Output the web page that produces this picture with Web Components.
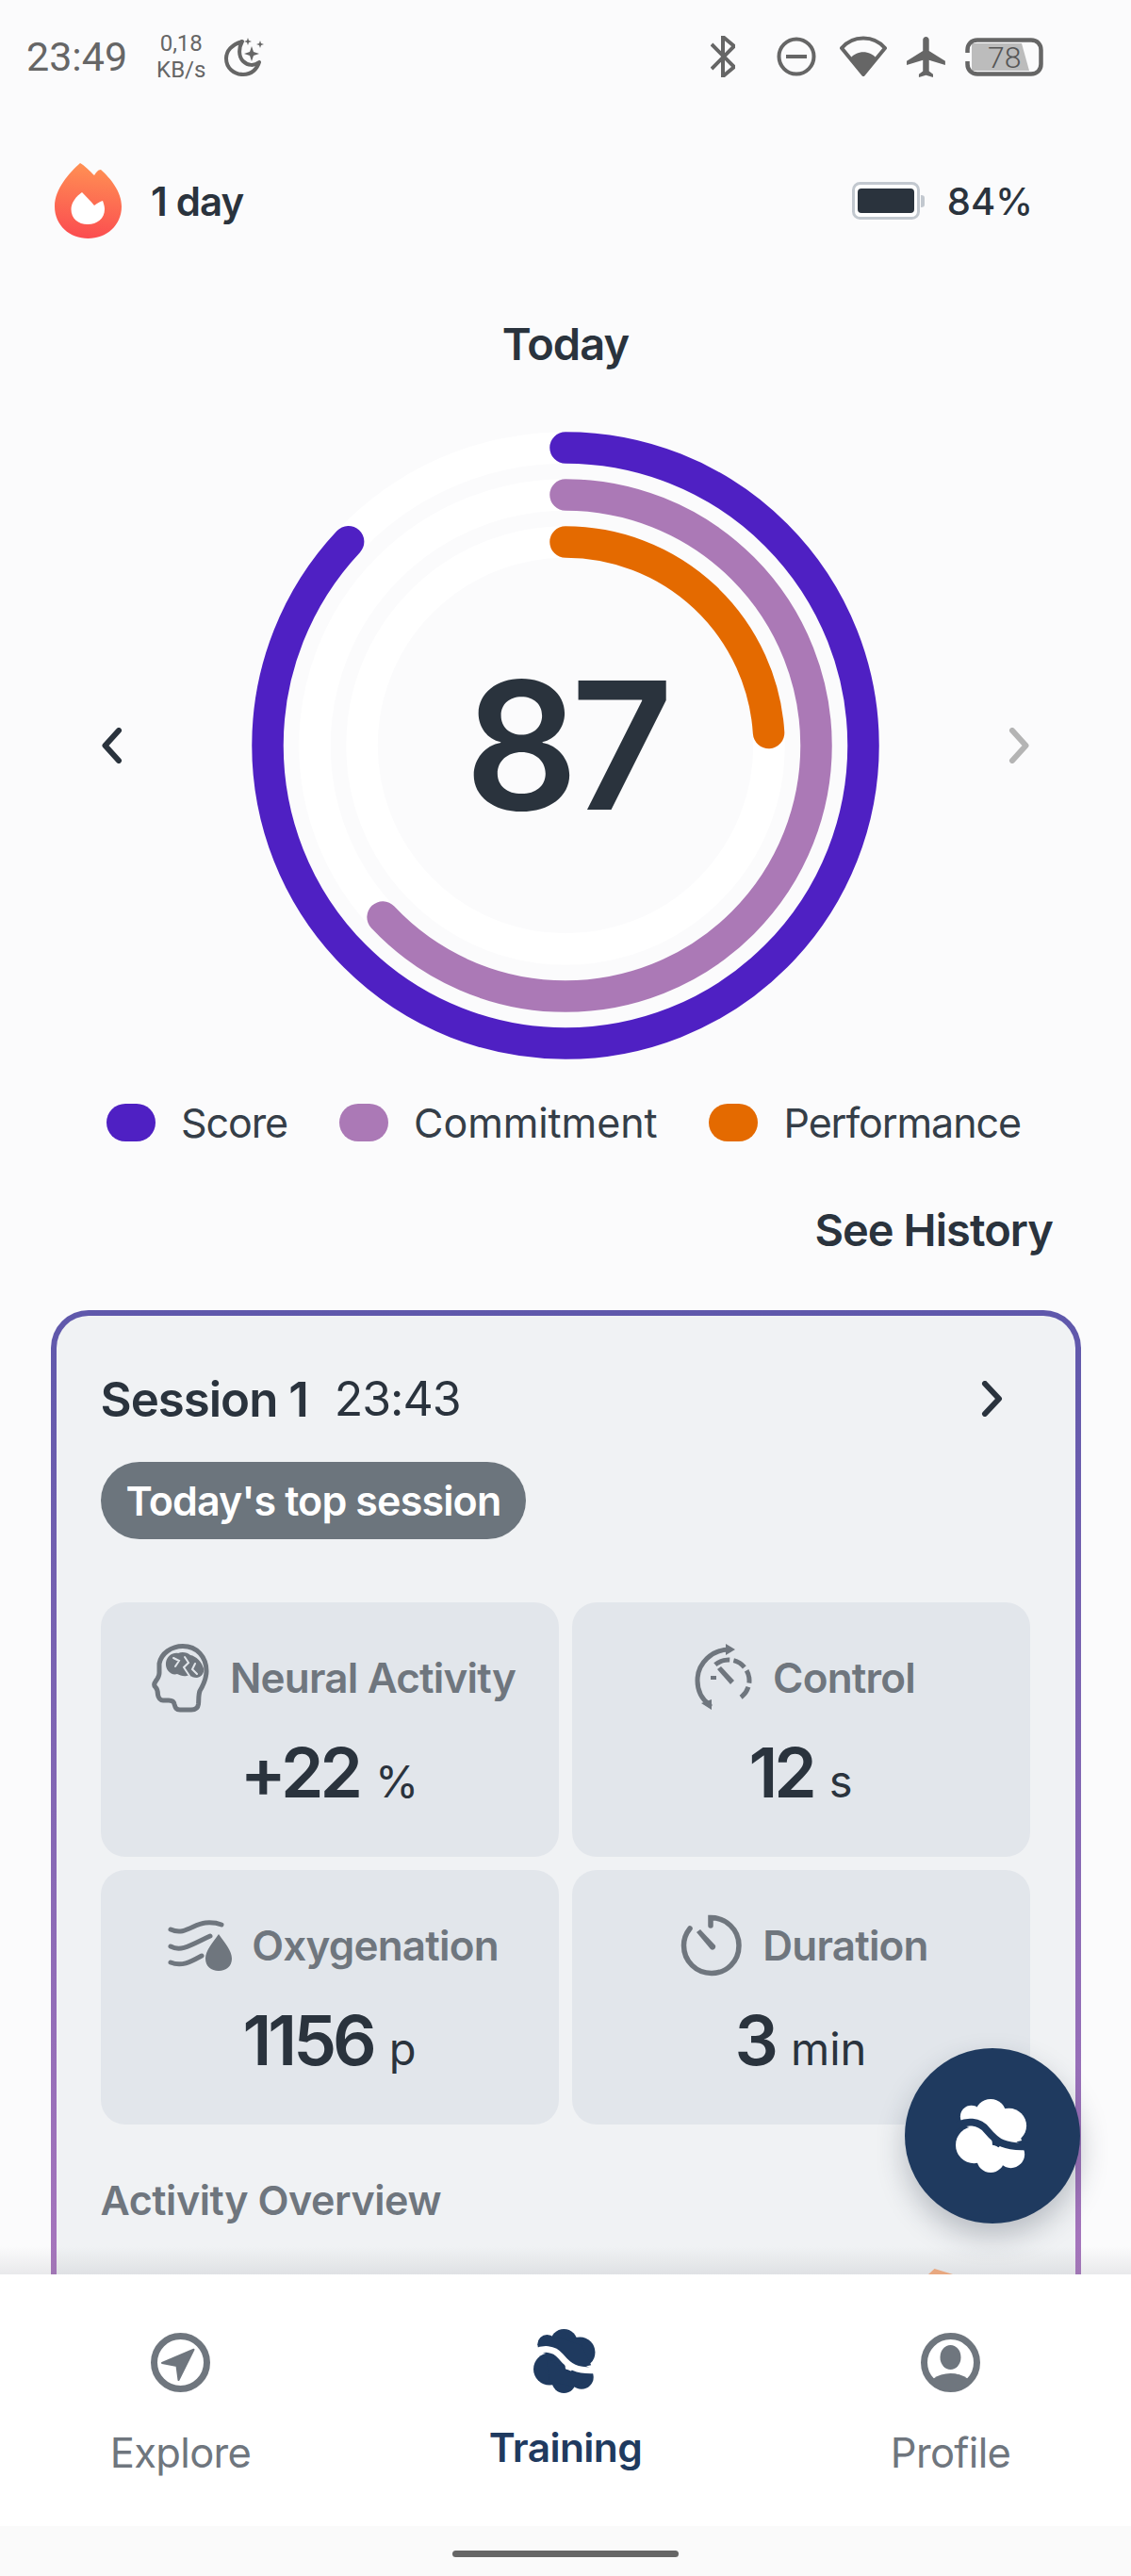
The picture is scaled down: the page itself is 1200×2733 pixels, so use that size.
<!DOCTYPE html>
<html lang="en">
<head>
<meta charset="utf-8">
<title>Training</title>
<style>
  html, body { margin: 0; padding: 0; background: #fbfbfc; }
  body { font-family: "Inter", "Liberation Sans", sans-serif; color: #2a333d; }
</style>
</head>
<body>
<app-screen>
  <status-bar></status-bar>
  <streak-row></streak-row>
  <day-title>Today</day-title>
  <score-ring score="87" commitment="63" performance="24"></score-ring>
  <ring-legend></ring-legend>
  <see-history>See History</see-history>
  <session-card name="Session 1" time="23:43" badge="Today's top session">
    <stat-tile label="Neural Activity" value="+22" unit="%">
      <svg slot="icon" width="63" height="75" viewBox="0 0 63 75">
        <path d="M34 3.500C49 3.500 59 15 59 30C59 39 55 46 52 51C50.500 55 51 60 50.500 65C50 69 47 71 43 71H31C27 71 26 69 25 65C24.500 62 22 61 19 61H13C10 61 8 58 7.500 55C7.500 52 7 49 5 47C3 45 3.500 43 5 41C7 38 9 36 9 32V22C11 11 22 3.500 34 3.500Z" fill="none" stroke="#6f767e" stroke-width="5"/>
        <path d="M16 21C17 14 23 10 29 11C33 9 39 10 42 13C48 14 54 20 56 27C57 32 54 36 49 37C44 37 41 34 38 35C34 36 31 34 28 33C22 35 15 29 16 21Z" fill="#6f767e"/>
        <path d="M24 16L30 19L26 25M36 15L40 21L35 26L41 35M47 22L44 28L49 33" fill="none" stroke="#e2e6eb" stroke-width="2" stroke-linecap="round"/>
      </svg>
    </stat-tile>
    <stat-tile label="Control" value="12" unit="s">
      <svg slot="icon" width="63" height="72" viewBox="0 0 63 72">
        <path d="M38 6C20 6 4 20 4 39C4 50 9 59 17 65" fill="none" stroke="#6f767e" stroke-width="5" stroke-linecap="round"/>
        <path d="M34 0L44 6L34 12Z M8 63L19 59L19 70Z" fill="#6f767e"/>
        <circle cx="37" cy="39" r="22" fill="none" stroke="#6f767e" stroke-width="5" transform="rotate(-130 37 39)" pathLength="100" style="stroke-dasharray:12 3 10 3 10 3 10 49"/>
        <path d="M25 27L29 24L43 39L39 43Z" fill="#6f767e"/>
        <path d="M18 36H24" stroke="#6f767e" stroke-width="4"/>
      </svg>
    </stat-tile>
    <stat-tile label="Oxygenation" value="1156" unit="p">
      <svg slot="icon" width="68" height="55" viewBox="0 0 68 55">
        <path d="M3 10C18 17 27 4 40 3C47 2.500 52 3 57 5M3 28C14 34 24 27 45 17M3 45C15 50 25 44 36 38" fill="none" stroke="#6f767e" stroke-width="5" stroke-linecap="round"/>
        <path d="M54 15C60 24 68 32 68 41C68 49 62 54 54 54C46 54 40 49 40 41C40 32 48 24 54 15Z" fill="#6f767e"/>
      </svg>
    </stat-tile>
    <stat-tile label="Duration" value="3" unit="min">
      <svg slot="icon" width="66" height="66" viewBox="0 0 66 66">
        <path d="M32 12V3.500C48 3.500 62 16 62 33C62 50 49 62.500 33 62.500C17 62.500 3.500 50 3.500 33C3.500 26 6 20 10 15" fill="none" stroke="#6f767e" stroke-width="5.500" stroke-linecap="round"/>
        <path d="M17 19L21 16L37 33C38 36 35 39 32 37Z" fill="#6f767e"/>
      </svg>
    </stat-tile>
  </session-card>
  <app-fab slot="fab"></app-fab>
  <bottom-nav slot="nav"></bottom-nav>
</app-screen>

<script>
// helper: every element gets an open shadow root from a template string
function define(name, html, setup) {
  const template = document.createElement('template');
  template.innerHTML = html;
  customElements.define(name, class extends HTMLElement {
    constructor() {
      super();
      this.attachShadow({ mode: 'open' }).appendChild(template.content.cloneNode(true));
    }
    connectedCallback() {
      if (setup) setup(this, this.shadowRoot);
    }
  });
}

// ---- page frame ----
define('app-screen', `
  <style>
    :host { display: flex; flex-direction: column; position: relative; width: 1200px; height: 2733px; overflow: hidden; background: #fbfbfc; }
    #scroll { position: relative; height: 2413px; overflow: hidden; flex: none; }
    #scroll::after { content: ""; position: absolute; left: 0; right: 0; bottom: 0; height: 30px; background: linear-gradient(rgba(120,124,130,0), rgba(120,124,130,.14)); }
    #peek { position: absolute; left: 985px; top: 2407px; width: 26px; height: 6px; background: #e8a880; clip-path: polygon(0 100%, 25% 0, 100% 100%); z-index: 1; }
  </style>
  <div id="scroll"><slot></slot><div id="peek"></div></div>
  <slot name="fab"></slot>
  <slot name="nav"></slot>
`);

// ---- android status bar ----
define('status-bar', `
  <style>
    :host { display: flex; align-items: center; justify-content: space-between; height: 120px; padding: 0 93px 0 28px; font-family: Roboto, "Liberation Sans", sans-serif; color: #666; }
    .side { display: flex; align-items: center; }
    #time { font-size: 43px; }
    #speed { font-size: 24px; line-height: 28px; text-align: center; margin: 0 20px 0 31px; }
    svg { display: block; }
    #batt { position: relative; width: 83px; height: 41px; }
    #batt span { position: absolute; left: 24px; top: 2px; font-size: 32px; line-height: 38px; color: #555; font-weight: 300; }
  </style>
  <div class="side">
    <span id="time">23:49</span>
    <span id="speed">0,18<br>KB/s</span>
    <svg width="42" height="42" viewBox="0 0 42 42" fill="none" stroke="#666">
      <path d="M19 5C8 8 2 15 2 23C2 33 10 40 20 40C29 40 35 34 37 27C32 31 25 31 20 26C15 21 15 12 19 5Z" stroke-width="4" stroke-linejoin="round"/>
      <path d="M29 10L31 16L37 18L31 20L29 26L27 20L21 18L27 16Z M25 1L26 4L29 5L26 6L25 9L24 6L21 5L24 4Z M38 4L39 7L42 8L39 9L38 12L37 9L34 8L37 7Z" fill="#666" stroke="none"/>
    </svg>
  </div>
  <div class="side">
    <svg width="26" height="44" viewBox="0 0 26 44" fill="none" stroke="#666" stroke-width="4" style="margin-right:44px">
      <path d="M1 9L25 33L13 43V1L25 11L1 35"/>
    </svg>
    <svg width="42" height="42" viewBox="0 0 42 42" fill="none" stroke="#666" stroke-width="4" style="margin-right:25px">
      <circle cx="21" cy="21" r="18.500"/><path d="M10 21H32" stroke-width="4"/>
    </svg>
    <svg width="50" height="44" viewBox="0 0 50 44" style="margin-right:21px">
      <path d="M2 13C14 -1 36 -1 48 13L25 41Z" fill="none" stroke="#666" stroke-width="4" stroke-linejoin="round"/>
      <path d="M11 24C18 15 32 15 39 24L25 41Z" fill="#666"/>
    </svg>
    <svg width="42" height="43" viewBox="2 2 19.500 20" style="margin-right:20px">
      <path d="M21 16v-2l-8-5V3.500c0-.83-.67-1.500-1.500-1.500S10 2.670 10 3.500V9l-8 5v2l8-2.500V19l-2 1.500V22l3.500-1 3.500 1v-1.500L13 19v-5.500l8 2.500z" fill="#666"/>
    </svg>
    <div id="batt">
      <svg width="83" height="41" viewBox="0 0 83 41">
        <path d="M7 6H60L68 35H7Z" fill="#bcbcbc"/>
        <path d="M2.500 16V13C2.500 7 6.500 2.500 13 2.500H70C76.500 2.500 80.500 7 80.500 13V28C80.500 34 76.500 38.500 70 38.500H13C6.500 38.500 2.500 34 2.500 28V25" fill="none" stroke="#666" stroke-width="4.500"/>
      </svg>
      <span>78</span>
    </div>
  </div>
`);

// ---- streak + device battery ----
define('streak-row', `
  <style>
    :host { display: flex; align-items: center; justify-content: space-between; padding: 53px 104px 0 58px; height: 80px; font-size: 42px; letter-spacing: -0.02em; }
    .side { display: flex; align-items: center; }
    #day { font-weight: 600; margin-left: 31px; }
    #pct { font-weight: 500; font-size: 40px; margin-left: 23px; letter-spacing: 0; }
    svg { display: block; }
  </style>
  <div class="side">
    <svg width="71" height="80" viewBox="0 0 71 80">
      <defs><linearGradient id="fl" x1="0.5" y1="0" x2="0.4" y2="1"><stop offset="0" stop-color="#ff9154"/><stop offset="1" stop-color="#fb4c50"/></linearGradient></defs>
      <path d="M27 0C31 2 38 9 42 13C44 10 46 7 49 7C59 16 71 30 71 46C71 66 55 80 35.500 80C16 80 0 66 0 46C0 27 16 10 27 0Z" fill="url(#fl)"/>
      <path d="M29 31C33 35 38 40 42 45C45 43 47 41 51 40C52 43 53 46 53 49C53 59 45 65 35 65C25 65 17.500 59 17.500 49C17.500 42 23 35 29 31Z" fill="#fff"/>
    </svg>
    <span id="day">1 day</span>
  </div>
  <div class="side">
    <svg width="78" height="40" viewBox="0 0 78 40">
      <rect x="1.500" y="1.500" width="69" height="37" rx="7" fill="#fff" stroke="#c2c8cf" stroke-width="3"/>
      <rect x="6" y="7" width="60" height="26" rx="4" fill="#2a333d"/>
      <path d="M73 14C76 14 77 15 77 17V24C77 26 76 27 73 27Z" fill="#c2c8cf"/>
    </svg>
    <span id="pct">84%</span>
  </div>
`);

define('day-title', `
  <style>
    :host { display: block; text-align: center; margin-top: 87px; font-size: 47px; line-height: 50px; font-weight: 600; letter-spacing: -0.02em; }
  </style>
  <slot></slot>
`);

// ---- the three concentric progress rings ----
define('score-ring', `
  <style>
    :host { display: flex; align-items: center; justify-content: space-between; padding: 0 108px; margin-top: 68px; }
    #dial { display: grid; place-items: center; width: 666px; height: 666px; }
    #dial > * { grid-area: 1 / 1; }
    #num { font-size: 188px; font-weight: 600; letter-spacing: -0.04em; line-height: 1; color: #2a333d; }
    svg { display: block; }
  </style>
  <svg width="22" height="38" viewBox="0 0 22 38" fill="none" stroke="#2a333d" stroke-width="6" stroke-linecap="round" stroke-linejoin="round"><path d="M18 3L3.500 19L18 35"/></svg>
  <div id="dial">
    <svg width="666" height="666" viewBox="0 0 666 666">
      <g fill="none" stroke-width="33.500" transform="rotate(-90 333 333)">
        <circle cx="333" cy="333" r="316" stroke="#fff"/>
        <circle cx="333" cy="333" r="266" stroke="#fff"/>
        <circle cx="333" cy="333" r="216" stroke="#fff"/>
        <circle id="a" cx="333" cy="333" r="316" stroke="#4f20c3" stroke-linecap="round" pathLength="100"/>
        <circle id="b" cx="333" cy="333" r="266" stroke="#ab79b6" stroke-linecap="round" pathLength="100"/>
        <circle id="c" cx="333" cy="333" r="216" stroke="#e46a00" stroke-linecap="round" pathLength="100"/>
      </g>
    </svg>
    <span id="num"></span>
  </div>
  <svg width="22" height="38" viewBox="0 0 22 38" fill="none" stroke="#b4b4b4" stroke-width="6" stroke-linecap="round" stroke-linejoin="round"><path d="M4 3L18.500 19L4 35"/></svg>
`, (el, root) => {
  root.querySelector('#num').textContent = el.getAttribute('score');
  root.querySelector('#a').setAttribute('stroke-dasharray', el.getAttribute('score') + ' 100');
  root.querySelector('#b').setAttribute('stroke-dasharray', el.getAttribute('commitment') + ' 100');
  root.querySelector('#c').setAttribute('stroke-dasharray', el.getAttribute('performance') + ' 100');
});

define('ring-legend', `
  <style>
    :host { display: flex; align-items: center; padding-left: 113px; margin-top: 47px; height: 40px; font-size: 43px; letter-spacing: -0.012em; color: #353e48; }
    i { width: 52px; height: 40px; border-radius: 20px; margin-right: 27px; flex: none; }
    span { margin-right: 55px; }
  </style>
  <i style="background:#4f20c3"></i><span style="letter-spacing:-.025em">Score</span>
  <i style="background:#ab79b6"></i><span style="letter-spacing:-.002em">Commitment</span>
  <i style="background:#e46a00"></i><span style="letter-spacing:-.025em">Performance</span>
`);

define('see-history', `
  <style>
    :host { display: block; text-align: right; padding-right: 83px; margin-top: 69px; font-size: 47px; line-height: 50px; font-weight: 600; letter-spacing: -0.02em; }
  </style>
  <slot></slot>
`);

// ---- session summary card, runs on under the bottom nav ----
define('session-card', `
  <style>
    :host { display: block; box-sizing: border-box; margin: 60px 53.500px 0; height: 1160px; padding: 60px 47px 0; border: 6.500px solid transparent; border-radius: 40px; background: linear-gradient(#f0f2f4, #f0f2f4) padding-box, linear-gradient(180deg, #5f58ab 0%, #a876bd 90%) border-box; }
    #head { display: flex; align-items: center; height: 56px; font-size: 51px; letter-spacing: -0.02em; }
    #name { font-weight: 600; margin-right: 28px; }
    #time { font-size: 50px; letter-spacing: -0.02em; }
    #head svg { margin-left: auto; margin-right: 30px; display: block; }
    #badge { display: inline-block; margin-top: 39px; height: 82px; padding: 0 27px; border-radius: 41px; background: #6c757d; color: #fff; font-size: 43px; line-height: 82px; font-weight: 600; letter-spacing: -0.02em; }
    #grid { display: grid; grid-template-columns: 486px 486px; gap: 14px; margin-top: 67px; }
    #over { margin-top: 55px; font-size: 43px; line-height: 50px; font-weight: 600; color: #6f767e; letter-spacing: -0.01em; }
  </style>
  <div id="head">
    <span id="name"></span><span id="time"></span>
    <svg width="23" height="38" viewBox="0 0 23 38" fill="none" stroke="#2a333d" stroke-width="6" stroke-linecap="round" stroke-linejoin="round"><path d="M4 3L19 19L4 35"/></svg>
  </div>
  <div id="badge"></div>
  <div id="grid"><slot></slot></div>
  <div id="over">Activity Overview</div>
`, (el, root) => {
  root.querySelector('#name').textContent = el.getAttribute('name');
  root.querySelector('#time').textContent = el.getAttribute('time');
  root.querySelector('#badge').textContent = el.getAttribute('badge');
});

define('stat-tile', `
  <style>
    :host { display: flex; flex-direction: column; align-items: center; height: 270px; padding-top: 40px; box-sizing: border-box; background: #e2e6eb; border-radius: 26px; }
    #head { display: flex; align-items: center; gap: 21px; height: 80px; padding-left: 8px; font-size: 44px; font-weight: 600; color: #6f767e; letter-spacing: -0.018em; }
    ::slotted(svg) { display: block; }
    #val { display: flex; align-items: baseline; gap: 17px; margin-top: 16px; color: #2a333d; }
    #n { font-size: 73px; line-height: 90px; font-weight: 600; letter-spacing: -0.055em; }
    #u { font-size: 47px; font-weight: 400; }
  </style>
  <div id="head"><slot name="icon"></slot><span id="l"></span></div>
  <div id="val"><span id="n"></span><span id="u"></span></div>
`, (el, root) => {
  root.querySelector('#l').textContent = el.getAttribute('label');
  root.querySelector('#n').textContent = el.getAttribute('value');
  root.querySelector('#u').textContent = el.getAttribute('unit');
});

// ---- brand mark: cloud cut by a wave ----
define('brand-mark', `
  <style>
    :host { display: block; }
    svg { display: block; width: 100%; height: 100%; }
    .cloud { fill: var(--mark, #fff); }
    .cut { fill: none; stroke: var(--cut, #1f3a5f); stroke-width: 8; }
  </style>
  <svg viewBox="0 0 80 80">
    <g class="cloud">
      <circle cx="38" cy="17" r="17"/><circle cx="58" cy="29" r="19"/><circle cx="17" cy="19" r="12"/>
      <path d="M10 26L30 10L60 20L72 45L50 50Z"/>
      <circle cx="20" cy="50" r="20"/><circle cx="38" cy="65" r="15"/><circle cx="60" cy="60" r="15"/>
      <path d="M16 35L40 50L70 62L50 72L20 65Z"/>
    </g>
    <path class="cut" d="M-3 31C12 22 26 24 34 34C44 46 52 54 84 51"/>
  </svg>
`);

define('app-fab', `
  <style>
    :host { position: absolute; left: 960px; top: 2173px; width: 186px; height: 186px; border-radius: 50%; background: #1f3a5f; display: flex; align-items: center; justify-content: center; box-shadow: 0 14px 30px rgba(40,50,70,.28); z-index: 2; }
    brand-mark { width: 78px; height: 80px; --mark: #fff; --cut: #1f3a5f; }
  </style>
  <brand-mark></brand-mark>
`);

// ---- bottom tabs + gesture area ----
define('bottom-nav', `
  <style>
    :host { display: block; position: relative; z-index: 1; }
    #tabs { display: grid; grid-template-columns: 383px 434px 383px; height: 267px; background: #fff; }
    #home { height: 53px; display: flex; justify-content: center; padding-top: 26px; box-sizing: border-box; background: #fafafa; }
    #home i { display: block; width: 240px; height: 7px; border-radius: 4px; background: #666; }
    brand-mark { width: 68px; height: 74px; --mark: #1f3a5f; --cut: #fff; }
  </style>
  <div id="tabs">
    <nav-item label="Explore">
      <svg width="63" height="63" viewBox="0 0 63 63">
        <circle cx="31.500" cy="31.500" r="28" fill="none" stroke="#6f767e" stroke-width="7"/>
        <path d="M45.500 17.700L29.500 50L27.500 35L12 32Z" fill="#6f767e" stroke="#6f767e" stroke-width="2" stroke-linejoin="round"/>
      </svg>
    </nav-item>
    <nav-item label="Training" active><brand-mark></brand-mark></nav-item>
    <nav-item label="Profile">
      <svg width="63" height="63" viewBox="0 0 63 63">
        <defs><clipPath id="pc"><circle cx="31.500" cy="31.500" r="30"/></clipPath></defs>
        <circle cx="31.500" cy="31.500" r="28" fill="none" stroke="#6f767e" stroke-width="7"/>
        <ellipse cx="31.500" cy="26" rx="11" ry="13" fill="#6f767e"/>
        <ellipse cx="31.500" cy="63" rx="26" ry="20" fill="#6f767e" clip-path="url(#pc)"/>
      </svg>
    </nav-item>
  </div>
  <div id="home"><i></i></div>
`);

define('nav-item', `
  <style>
    :host { display: flex; flex-direction: column; align-items: center; padding-top: 56px; color: #6f767e; font-size: 43.500px; letter-spacing: -0.015em; }
    :host([active]) { padding-top: 55px; color: #1f3a5f; font-weight: 600; font-size: 42.500px; }
    #icon { height: 74px; display: flex; align-items: center; }
    #text { margin-top: 34px; line-height: 50px; }
    :host([active]) #text { margin-top: 30px; }
  </style>
  <div id="icon"><slot></slot></div>
  <div id="text"></div>
`, (el, root) => {
  root.querySelector('#text').textContent = el.getAttribute('label');
});
</script>
</body>
</html>
